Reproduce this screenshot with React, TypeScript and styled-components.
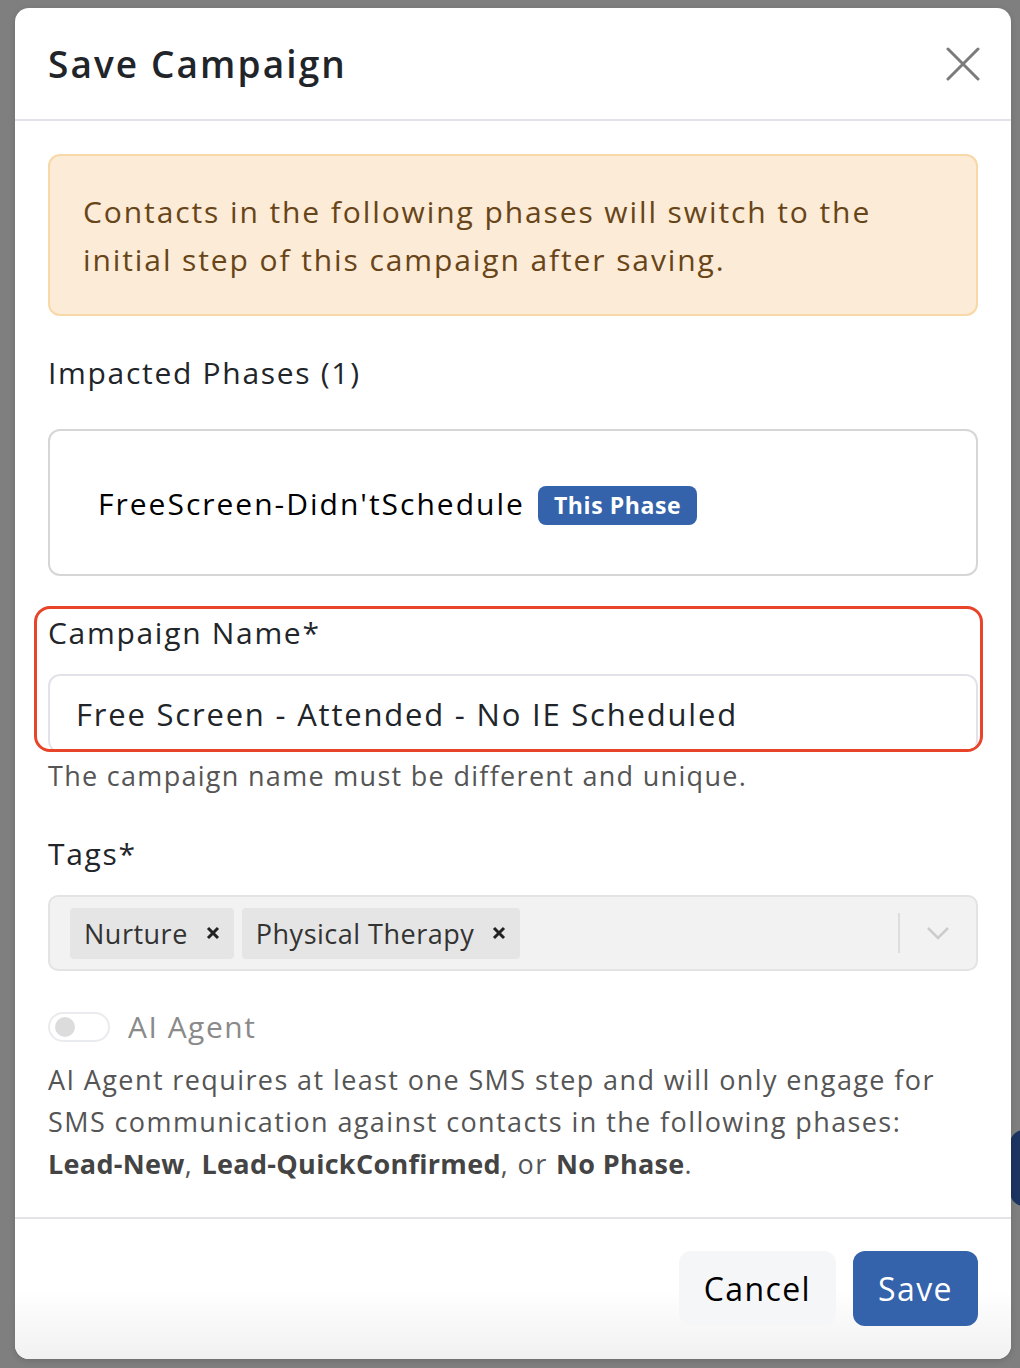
import styled, { createGlobalStyle } from "styled-components";

const GlobalStyle = createGlobalStyle`
  * { box-sizing: border-box; }
  body {
    margin: 0;
    background: #7f7f7f;
    font-family: "Open Sans", "Liberation Sans", sans-serif;
    color: #212529;
  }
`;

function CloseIcon() {
  return (
    <svg width="34" height="34" viewBox="0 0 34 34" fill="none">
      <path d="M2 2L32 32M32 2L2 32" stroke="#7b7b7b" strokeWidth="3" strokeLinecap="round" />
    </svg>
  );
}

function RemoveIcon() {
  return (
    <svg width="14" height="14" viewBox="0 0 14 14" fill="none">
      <path d="M2 2L12 12M12 2L2 12" stroke="#222" strokeWidth="3" />
    </svg>
  );
}

function Chevron() {
  return (
    <svg width="24" height="14" viewBox="0 0 24 14" fill="none">
      <path d="M2 2L12 12L22 2" stroke="#cccccc" strokeWidth="2.5" />
    </svg>
  );
}

function App() {
  return (
    <>
      <GlobalStyle />
      <StBackdrop>
        <StPageEdge />
        <StModal>
          <StHeader>
            <StTitle>Save Campaign</StTitle>
            <StCloseButton aria-label="Close">
              <CloseIcon />
            </StCloseButton>
          </StHeader>

          <StBody>
            <StAlert>
              Contacts in the following phases will switch to the initial step of this campaign after
              saving.
            </StAlert>

            <StSectionLabel>Impacted Phases (1)</StSectionLabel>
            <StPhaseBox>
              <StPhaseName>FreeScreen-Didn'tSchedule</StPhaseName>
              <StBadge>This Phase</StBadge>
            </StPhaseBox>

            <StHighlight>
              <StFieldLabel>Campaign Name*</StFieldLabel>
              <StInput defaultValue="Free Screen - Attended - No IE Scheduled" />
            </StHighlight>
            <StHelp>The campaign name must be different and unique.</StHelp>

            <StFieldLabel $top={35}>Tags*</StFieldLabel>
            <StSelect>
              <StChips>
                <StChip>
                  Nurture
                  <RemoveIcon />
                </StChip>
                <StChip>
                  Physical Therapy
                  <RemoveIcon />
                </StChip>
              </StChips>
              <StIndicator>
                <Chevron />
              </StIndicator>
            </StSelect>

            <StToggleRow>
              <StToggle>
                <StKnob />
              </StToggle>
              <StToggleLabel>AI Agent</StToggleLabel>
            </StToggleRow>
            <StNote>
              AI Agent requires at least one SMS step and will only engage for SMS communication against
              contacts in the following phases: <b>Lead-New</b>, <b>Lead-QuickConfirmed</b>, or{" "}
              <b>No Phase</b>.
            </StNote>
          </StBody>

          <StFooter>
            <StButton $variant="secondary">Cancel</StButton>
            <StButton $variant="primary">Save</StButton>
          </StFooter>
        </StModal>
      </StBackdrop>
    </>
  );
}

export default App;

const StBackdrop = styled.div`
  position: relative;
  min-height: 1368px;
  padding: 8px 9px 10px 15px;
  background: #7f7f7f;
  overflow: hidden;
`;

const StPageEdge = styled.div`
  position: absolute;
  right: -40px;
  top: 1130px;
  width: 50px;
  height: 76px;
  border-radius: 14px;
  background: #1c3461;
`;

const StModal = styled.div`
  position: relative;
  width: 996px;
  background: #fff;
  border-radius: 14px;
  overflow: hidden;
  box-shadow: 0 2px 6px rgba(0, 0, 0, 0.15);
`;

const StHeader = styled.div`
  display: flex;
  align-items: center;
  justify-content: space-between;
  height: 113px;
  padding: 0 31px 0 33px;
  border-bottom: 2px solid #e2e2e8;
`;

const StTitle = styled.h1`
  margin: 0;
  font-size: 37px;
  font-weight: 600;
  color: #212529;
  letter-spacing: 2.1px;
`;

const StCloseButton = styled.button`
  display: flex;
  padding: 0;
  border: none;
  background: none;
`;

const StBody = styled.div`
  padding: 33px 33px 32px;
`;

const StAlert = styled.div`
  height: 162px;
  padding: 32px 33px 0;
  background: #fcebd6;
  border: 2px solid #f8d8a6;
  border-radius: 12px;
  color: #684519;
  font-size: 30px;
  line-height: 48px;
  letter-spacing: 1.9px;
`;

const StSectionLabel = styled.div`
  margin: 34px 0 34px;
  font-size: 30px;
  line-height: 45px;
  letter-spacing: 1.7px;
`;

const StPhaseBox = styled.div`
  display: flex;
  align-items: center;
  gap: 13px;
  height: 147px;
  padding: 2px 48px 0;
  border: 2px solid #d6d6d6;
  border-radius: 12px;
`;

const StPhaseName = styled.span`
  font-size: 30px;
  color: #000;
  letter-spacing: 2px;
`;

const StBadge = styled.span`
  display: inline-flex;
  align-items: center;
  height: 39px;
  margin-top: 3px;
  padding: 0 16px;
  border-radius: 8px;
  background: #3463ab;
  color: #fff;
  font-size: 23px;
  font-weight: 700;
  letter-spacing: 0.6px;
`;

const StHighlight = styled.div`
  margin: 30px -5px 0 -14px;
  padding: 1px 2px 0 11px;
  border: 3px solid #e8442a;
  border-radius: 16px;
  overflow: hidden;
`;

const StFieldLabel = styled.div<{ $top?: number }>`
  margin-top: ${(p) => p.$top ?? 0}px;
  font-size: 30px;
  line-height: 45px;
  letter-spacing: 1.7px;
`;

const StInput = styled.input`
  display: block;
  width: 100%;
  height: 79px;
  margin: 19px 0 -4px;
  padding: 0 26px;
  border: 2px solid #e2e2e8;
  border-radius: 12px;
  font-family: inherit;
  font-size: 31px;
  letter-spacing: 1.8px;
  color: #212529;
  outline: none;
`;

const StHelp = styled.div`
  margin-top: 4px;
  font-size: 27px;
  line-height: 40px;
  letter-spacing: 1.3px;
  color: #555;
`;

const StSelect = styled.div`
  display: flex;
  align-items: center;
  height: 76px;
  margin-top: 19px;
  padding: 0 0 0 20px;
  background: #f2f2f2;
  border: 2px solid #e3e3e3;
  border-radius: 10px;
`;

const StChips = styled.div`
  display: flex;
  flex: 1;
  gap: 8px;
`;

const StChip = styled.div`
  display: flex;
  align-items: center;
  gap: 18px;
  height: 51px;
  padding: 0 14px;
  background: #e5e5e5;
  border-radius: 4px;
  font-size: 27px;
  letter-spacing: 0.5px;
  color: #333;
`;

const StIndicator = styled.div`
  display: flex;
  align-items: center;
  height: 40px;
  padding: 0 26px;
  border-left: 2px solid #dddddd;
`;

const StToggleRow = styled.div`
  display: flex;
  align-items: center;
  gap: 18px;
  margin-top: 33px;
`;

const StToggle = styled.div`
  display: flex;
  align-items: center;
  width: 62px;
  height: 30px;
  padding: 0 5px;
  border: 2px solid #e9ebee;
  border-radius: 15px;
`;

const StKnob = styled.div`
  width: 20px;
  height: 20px;
  border-radius: 50%;
  background: #dcdcdc;
`;

const StToggleLabel = styled.span`
  font-size: 30px;
  line-height: 45px;
  letter-spacing: 1.5px;
  color: #8a8a8a;
`;

const StNote = styled.p`
  margin: 10px 0 0;
  font-size: 27px;
  line-height: 42px;
  letter-spacing: 1.4px;
  color: #555;

  b {
    font-weight: 700;
    letter-spacing: 0.3px;
    color: #444;
  }
`;

const StFooter = styled.div`
  display: flex;
  justify-content: flex-end;
  gap: 17px;
  padding: 32px 33px 33px;
  border-top: 2px solid #e2e2e8;
  background: linear-gradient(to bottom, #fff 50%, #f1f1f1 100%);
`;

const StButton = styled.button<{ $variant: "primary" | "secondary" }>`
  height: 75px;
  padding: 0 25px;
  border: none;
  border-radius: 12px;
  font-family: inherit;
  font-size: 32px;
  letter-spacing: 1.4px;
  background: ${(p) => (p.$variant === "primary" ? "#3462ab" : "#f5f6f8")};
  color: ${(p) => (p.$variant === "primary" ? "#fff" : "#000")};
`;
